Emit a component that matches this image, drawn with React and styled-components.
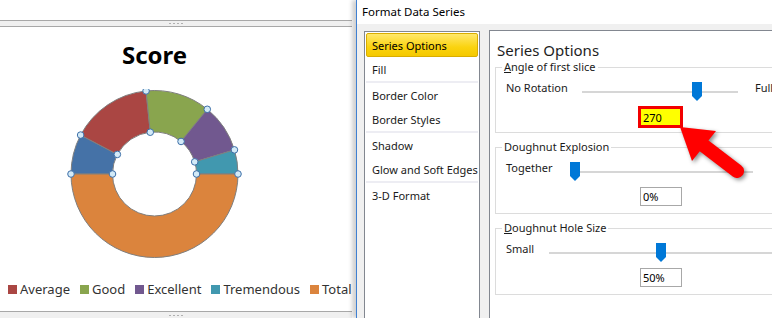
import React from 'react'
import styled, { createGlobalStyle } from 'styled-components'

const GlobalStyle = createGlobalStyle`
  html, body { margin: 0; padding: 0; }
  body {
    width: 772px;
    height: 318px;
    overflow: hidden;
    background: #fff;
    font-family: "Noto Sans", "Open Sans", sans-serif;
  }
`

const Page = styled.div`
  position: relative;
  display: flex;
  width: 772px;
  height: 318px;
  overflow: hidden;
`

/* ---------- chart side ---------- */

const ChartPane = styled.div`
  display: flex;
  flex-direction: column;
  width: 356px;
  flex: none;
  overflow: hidden;
`
const TopSpace = styled.div`
  height: 20px;
`
const Splitter = styled.div`
  display: flex;
  justify-content: center;
  align-items: center;
  height: 7px;
  box-sizing: border-box;
  background: #f0f0f0;
  border-top: 1px solid #a8a8a8;
  border-bottom: ${p => (p.$bottom ? 'none' : '1px solid #a8a8a8')};
  width: 352px;
`
const Grip = styled.div`
  width: 14px;
  height: 1px;
  background: repeating-linear-gradient(90deg, #b0b0b0 0 2px, transparent 2px 4px);
`
const ChartArea = styled.div`
  flex: 1;
  width: 309px;
  display: flex;
  flex-direction: column;
  align-items: center;
`
const ChartTitle = styled.div`
  margin-top: 13px;
  font-size: 24px;
  line-height: 30px;
  font-weight: 700;
  color: #000;
`
const DonutSvg = styled.svg`
  display: block;
  margin-top: 19px;
`
const Legend = styled.div`
  align-self: flex-start;
  display: flex;
  align-items: center;
  margin-top: 21px;
  padding-left: 8px;
  white-space: nowrap;
  font-size: 13px;
  line-height: 18px;
  color: #333;
`
const LegendItem = styled.div`
  display: flex;
  align-items: center;
  margin-right: 10px;
`
const Swatch = styled.span`
  width: 9px;
  height: 9px;
  margin-right: 3px;
  background: ${p => p.$color};
`

/* ---------- dialog ---------- */

const Dialog = styled.div`
  flex: 1;
  display: flex;
  flex-direction: column;
  border-left: 1px solid #3f80d2;
  box-shadow: -4px 0 4px rgba(0, 0, 0, 0.18);
  background: #f0f0f0;
  z-index: 1;
  font-size: 11px;
`
const TitleBar = styled.div`
  display: flex;
  justify-content: space-between;
  align-items: center;
  height: 24px;
  padding: 0 1px 2px 5px;
  box-sizing: border-box;
  background: #fff;
  font-size: 11.5px;
  color: #000;
`
const Body = styled.div`
  flex: 1;
  display: flex;
  align-items: flex-start;
  padding: 7px 0 0 7px;
  min-height: 0;
`
const NavList = styled.div`
  width: 116px;
  height: 300px;
  flex: none;
  box-sizing: border-box;
  padding: 1px;
  border: 1px solid #828790;
  background: #fff;
`
const NavItem = styled.div`
  height: 24px;
  box-sizing: border-box;
  display: flex;
  align-items: center;
  padding-left: 6px;
  white-space: nowrap;
  color: #1a1a1a;
  border-radius: 2px;
  ${p =>
    p.$active &&
    `
    padding-left: 5px;
    background: linear-gradient(#ffe86b, #fad30f 60%, #f5c900);
    border: 1px solid #d9ad00;
    color: #000;
  `}
`
const NavSep = styled.div`
  height: 2px;
  background: #ededf3;
`
const Panel = styled.div`
  flex: 1;
  align-self: stretch;
  margin: -1px 0 0 9px;
  border-top: 1px solid #828790;
  border-left: 1px solid #828790;
  background: #fff;
  overflow: hidden;
`
const Heading = styled.div`
  margin: 10px 0 0 7px;
  font-size: 15px;
  line-height: 18px;
  color: #1e1e1e;
`
const Group = styled.fieldset`
  width: 300px;
  margin: 0 0 0 5px;
  padding: 0;
  border: 1px solid #dcdcdc;
  & + & { margin-top: 6px; }
`
const GroupTitle = styled.legend`
  margin-left: 6px;
  padding: 0 2px;
  line-height: 16px;
  color: #1a1a1a;
`
const SliderRow = styled.div`
  display: flex;
  height: 20px;
  margin-top: 5px;
  padding-left: 10px;
  line-height: 16px;
  color: #1a1a1a;
`
const SliderLabel = styled.div`
  width: ${p => p.$w}px;
  flex: none;
  white-space: nowrap;
`
const Track = styled.div`
  position: relative;
  width: ${p => p.$w}px;
  height: 2px;
  margin-top: 11px;
  flex: none;
  background: #d6d6d6;
`
const Thumb = styled.svg`
  position: absolute;
  top: -9px;
  left: ${p => p.$at}px;
`
const EndLabel = styled.div`
  margin-left: 17px;
  white-space: nowrap;
`
const ValueBox = styled.div`
  box-sizing: border-box;
  display: flex;
  align-items: center;
  color: #000;
  ${p =>
    p.$hl
      ? `
    width: 45px; height: 22px;
    margin: 6px 0 4px 142px;
    padding-left: 2px;
    border: 3px solid #f20000;
    background: #ffff00;
  `
      : `
    width: 42px; height: 19px;
    margin: 7px 0 7px 144px;
    padding-left: 2px;
    border: 1px solid #a8a8a8;
    background: #fff;
  `}
`
const ArrowLayer = styled.svg`
  position: absolute;
  left: 0;
  top: 0;
  pointer-events: none;
  z-index: 2;
  filter: drop-shadow(2px 2px 2px rgba(0, 0, 0, 0.45));
`

/* ---------- donut ---------- */

const CX = 154.5
const CY = 85
const R_OUT = 83.5
const R_IN = 42
const slices = [
  { from: 180, to: 152.2, color: '#4572a7' },
  { from: 152.2, to: 95.8, color: '#aa4643' },
  { from: 95.8, to: 50.8, color: '#89a54e' },
  { from: 50.8, to: 16.8, color: '#71588f' },
  { from: 16.8, to: 0, color: '#4198af' },
  { from: 0, to: -180, color: '#db843d' },
]
const pt = (r, a) => {
  const rad = (a * Math.PI) / 180
  return [CX + r * Math.cos(rad), CY - r * Math.sin(rad)]
}
const slicePath = (a1, a2) => {
  const [x1, y1] = pt(R_OUT, a1)
  const [x2, y2] = pt(R_OUT, a2)
  const [x3, y3] = pt(R_IN, a2)
  const [x4, y4] = pt(R_IN, a1)
  const large = a1 - a2 > 180 ? 1 : 0
  return `M${x1} ${y1} A${R_OUT} ${R_OUT} 0 ${large} 1 ${x2} ${y2} L${x3} ${y3} A${R_IN} ${R_IN} 0 ${large} 0 ${x4} ${y4} Z`
}
const handleAngles = [180, 152.2, 95.8, 50.8, 16.8, 0]

const Donut = () => (
  <DonutSvg width="309" height="170" viewBox="0 0 309 170">
    {slices.map(s => (
      <path key={s.from} d={slicePath(s.from, s.to)} fill={s.color} stroke="#7f7f7f" strokeWidth="1" />
    ))}
    {handleAngles.flatMap(a =>
      [R_OUT, R_IN].map(r => {
        const [x, y] = pt(r, a)
        return <circle key={a + '-' + r} cx={x} cy={y} r="3.3" fill="#d3eaf7" stroke="#3d6fa8" strokeWidth="1" />
      })
    )}
  </DonutSvg>
)

const legend = [
  ['Average', '#aa4643'],
  ['Good', '#89a54e'],
  ['Excellent', '#71588f'],
  ['Tremendous', '#4198af'],
  ['Total', '#db843d'],
]

const ThumbIcon = ({ at }) => (
  <Thumb $at={at} width="10" height="19" viewBox="0 0 10 19">
    <path d="M0 0 H10 V14 L5 19 L0 14 Z" fill="#0078d7" />
  </Thumb>
)

export default function App() {
  return (
    <Page>
      <GlobalStyle />
      <ChartPane>
        <TopSpace />
        <Splitter><Grip /></Splitter>
        <ChartArea>
          <ChartTitle>Score</ChartTitle>
          <Donut />
          <Legend>
            {legend.map(([name, color]) => (
              <LegendItem key={name}>
                <Swatch $color={color} />
                {name}
              </LegendItem>
            ))}
          </Legend>
        </ChartArea>
        <Splitter $bottom><Grip /></Splitter>
      </ChartPane>

      <Dialog>
        <TitleBar>
          <span>Format Data Series</span>
          <span>?</span>
        </TitleBar>
        <Body>
          <NavList>
            <NavItem $active>Series Options</NavItem>
            <NavItem>Fill</NavItem>
            <NavSep />
            <NavItem>Border Color</NavItem>
            <NavItem>Border Styles</NavItem>
            <NavSep />
            <NavItem>Shadow</NavItem>
            <NavItem>Glow and Soft Edges</NavItem>
            <NavSep />
            <NavItem>3-D Format</NavItem>
          </NavList>
          <Panel>
            <Heading>Series Options</Heading>
            <Group>
              <GroupTitle><u>A</u>ngle of first slice</GroupTitle>
              <SliderRow>
                <SliderLabel $w={76}>No Rotation</SliderLabel>
                <Track $w={156}><ThumbIcon at={110} /></Track>
                <EndLabel>Full Rotation</EndLabel>
              </SliderRow>
              <ValueBox $hl>270</ValueBox>
            </Group>
            <Group>
              <GroupTitle>Doughnut Explosion</GroupTitle>
              <SliderRow>
                <SliderLabel $w={64}>Together</SliderLabel>
                <Track $w={183}><ThumbIcon at={0} /></Track>
              </SliderRow>
              <ValueBox>0%</ValueBox>
            </Group>
            <Group>
              <GroupTitle><u>D</u>oughnut Hole Size</GroupTitle>
              <SliderRow>
                <SliderLabel $w={43}>Small</SliderLabel>
                <Track $w={240}><ThumbIcon at={107} /></Track>
              </SliderRow>
              <ValueBox>50%</ValueBox>
            </Group>
          </Panel>
        </Body>
      </Dialog>

      <ArrowLayer width="772" height="318" viewBox="0 0 772 318">
        <line x1="737" y1="171" x2="703" y2="145" stroke="#ff0000" strokeWidth="14" strokeLinecap="round" />
        <polygon points="680,127 716,131 692,161" fill="#ff0000" />
      </ArrowLayer>
    </Page>
  )
}
